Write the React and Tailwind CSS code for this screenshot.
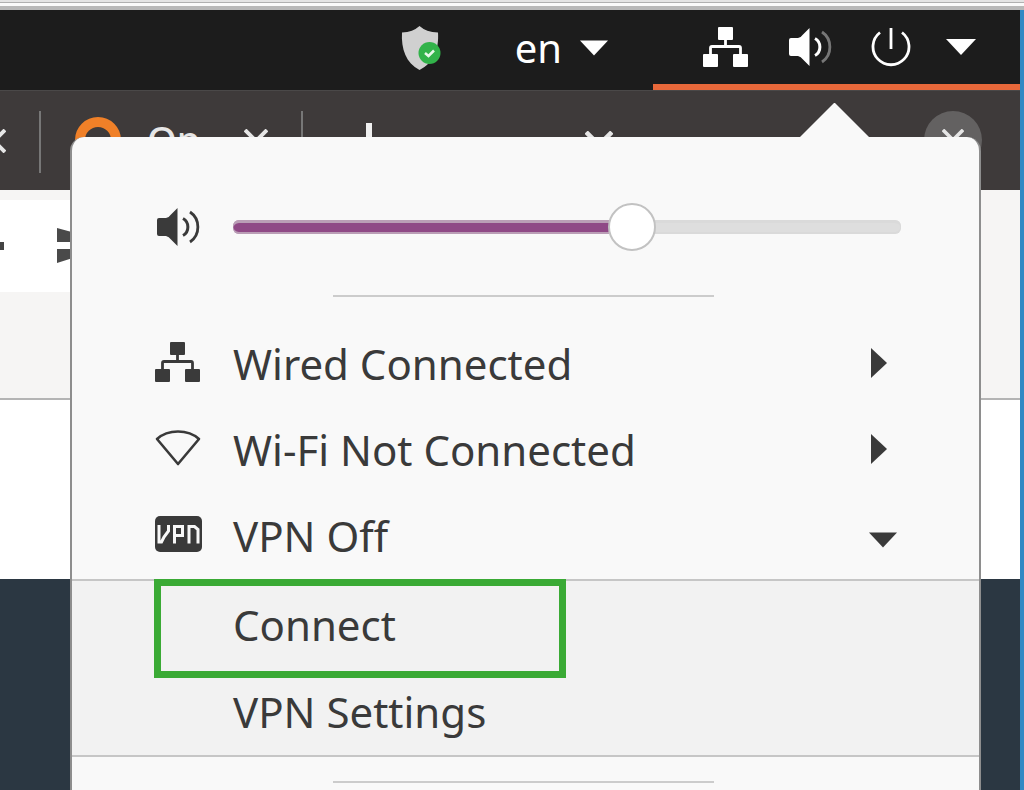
import { useState } from "react";

function NetworkIcon({ className }) {
  return (
    <svg viewBox="0 0 46 40" className={className} fill="currentColor" aria-hidden="true">
      <rect x="15" y="0" width="15" height="13" rx="1" />
      <rect x="0" y="27" width="15" height="13" rx="1" />
      <rect x="30" y="27" width="15" height="13" rx="1" />
      <path d="M22.500 12V19.500M7.500 28V21Q7.500 19.500 9 19.500H36Q37.500 19.500 37.500 21V28" fill="none" stroke="currentColor" strokeWidth="2.800" />
    </svg>
  );
}

function VolumeIcon({ className, dim }) {
  return (
    <svg viewBox="0 0 44 40" className={className} aria-hidden="true">
      <path d="M3 11H10Q13 10.500 15 7.500L21.500 1V39L15 32.500Q13 29.500 10 29H3Q1 29 1 27V13Q1 11 3 11Z" fill="currentColor" />
      <path d="M27 11.500C33.500 15 33.500 25 27 28.500" fill="none" stroke="currentColor" strokeWidth="3" />
      <path d="M34 5C44.500 12 44.500 28 34 35" fill="none" stroke="currentColor" strokeWidth="2.800" opacity={dim ? 0.4 : 1} />
    </svg>
  );
}

function WifiIcon({ className }) {
  return (
    <svg viewBox="0 0 46 38" className={className} aria-hidden="true">
      <path d="M2 10C13 0 33 0 44 10L23 35Z" fill="none" stroke="currentColor" strokeWidth="2.600" strokeLinejoin="round" />
    </svg>
  );
}

function VpnIcon({ className }) {
  return (
    <svg viewBox="0 0 48 36" className={className} aria-hidden="true">
      <rect width="47" height="36" rx="5" fill="currentColor" />
      <g fill="none" stroke="#f8f8f8" strokeWidth="3">
        <path d="M4 9V26H6.500L9 21L13.500 15V9" />
        <path d="M19.500 27.500V10.500H27.500V19.500H20" />
        <path d="M34 27.500V10.500H39.500L43 13.500V27.500" />
      </g>
    </svg>
  );
}

function PowerIcon({ className }) {
  return (
    <svg viewBox="0 0 40 40" className={className} fill="none" stroke="currentColor" strokeWidth="2.800" aria-hidden="true">
      <path d="M20 1V22M9 5.500A18 18 0 1 0 31 5.500" />
    </svg>
  );
}

function ShieldIcon({ className }) {
  return (
    <svg viewBox="0 0 40 46" className={className} aria-hidden="true">
      <path d="M18.500 1Q25 7 37 7.500C38 24 33 38 18.500 45C5 38 0 24 1 7.500Q12 7 18.500 1Z" fill="#d0d0d0" />
      <circle cx="28.500" cy="28" r="11" fill="#32b34a" />
      <path d="M24 28L27.500 31L33 25.500" fill="none" stroke="#e8f8ea" strokeWidth="2.500" />
    </svg>
  );
}

function DownArrow({ className }) {
  return (
    <svg viewBox="0 0 30 16" className={className} fill="currentColor" aria-hidden="true">
      <path d="M0 0H30L15 16Z" />
    </svg>
  );
}

function RightArrow({ className }) {
  return (
    <svg viewBox="0 0 16 30" className={className} fill="currentColor" aria-hidden="true">
      <path d="M0 0V30L16 15Z" />
    </svg>
  );
}

function CrossIcon({ className }) {
  return (
    <svg viewBox="0 0 24 24" className={className} fill="none" stroke="currentColor" strokeWidth="4" aria-hidden="true">
      <path d="M1 1L23 23M23 1L1 23" />
    </svg>
  );
}

function TopBar() {
  return (
    <header className="flex h-20 justify-end bg-[#1c1c1c] text-white">
      <div className="flex items-center pb-1">
        <ShieldIcon className="mr-[74px] h-[46px] w-10" />
        <button type="button" className="mr-[45px] flex items-center gap-[18px] text-[40px] leading-10">
          en
          <DownArrow className="h-4 w-7" />
        </button>
      </div>
      <button type="button" aria-label="System menu" className="flex w-[367px] items-center border-b-[6px] border-[#e8683a] pl-[50px]">
        <NetworkIcon className="h-10 w-[46px]" />
        <VolumeIcon className="ml-[39px] h-10 w-11" dim />
        <PowerIcon className="ml-[39px] h-10 w-10" />
        <DownArrow className="ml-[35px] h-4 w-[30px]" />
      </button>
    </header>
  );
}

function TabStrip() {
  return (
    <div className="flex h-[100px] items-start overflow-hidden border-t border-[#4a4848] bg-[#3e3a3a] pt-5 text-[#e6e6e6]">
      <CrossIcon className="mt-[18px] -ml-[18px] h-6 w-6 shrink-0" />
      <span className="ml-[33px] h-[62px] w-[2px] shrink-0 bg-[#777]" />
      <span className="mt-[6px] ml-[34px] h-[46px] w-[46px] shrink-0 rounded-full border-[10px] border-[#f08028]" />
      <span className="mt-[6px] ml-[26px] w-[97px] shrink-0 text-[38px] leading-[44px] font-medium">Op</span>
      <CrossIcon className="mt-[18px] h-6 w-6 shrink-0" />
      <span className="ml-[33px] h-[62px] w-[2px] shrink-0 bg-[#777]" />
      <span className="mt-3 ml-[63px] h-7 w-[6px] shrink-0 bg-[#f0f0f0]" />
      <CrossIcon className="mt-5 ml-[213px] h-7 w-7 shrink-0" />
      <span className="mr-[38px] ml-auto flex h-[58px] w-[58px] shrink-0 items-start justify-center rounded-full bg-[#636161] pt-[18px]">
        <CrossIcon className="h-[22px] w-[22px]" />
      </span>
    </div>
  );
}

function Page() {
  return (
    <div className="flex grow flex-col">
      <div className="flex h-[210px] flex-col border-b-2 border-[#b4b4b4] bg-[#f6f5f4]">
        <div className="mt-[10px] flex h-[92px] w-1/2 items-center bg-white">
          <span className="h-2 w-1 bg-[#444]" />
          <svg viewBox="0 0 30 36" className="ml-[53px] h-9 w-[30px]" fill="#4a4a4a" aria-hidden="true">
            <path d="M0 0L22 6V14H0ZM0 21H22V28L0 35Z" />
          </svg>
        </div>
      </div>
      <div className="h-[179px] bg-white" />
      <div className="grow bg-[#2b3742]" />
    </div>
  );
}

function MenuRow({ icon, label, open }) {
  return (
    <button type="button" aria-expanded={open} className="flex h-[86px] w-full items-center pr-[92px] pl-[83px] text-left">
      <span className="flex w-[78px] shrink-0 pb-1">{icon}</span>
      <span className="grow">{label}</span>
      {open ? <DownArrow className="mt-2 -mr-[10px] h-4 w-7" /> : <RightArrow className="mb-[2px] h-[30px] w-4" />}
    </button>
  );
}

function SystemMenu() {
  const [volume, setVolume] = useState(121);
  return (
    <div className="absolute top-[137px] right-[43px] bottom-0 left-[70px] rounded-t-[14px] border-x-2 border-[#8e8e8e] bg-[#f9f9f9] text-[42px] leading-[48px] text-[#3a3a3a]">
      <svg viewBox="0 0 72 36" className="absolute -top-[35px] right-[108px] h-9 w-[72px]" fill="#f9f9f9" aria-hidden="true">
        <path d="M0 36L35 1L36 1L71 36Z" />
      </svg>
      <div className="flex items-center pt-[66px] pr-[78px] pl-[84px]">
        <VolumeIcon className="mr-[33px] h-10 w-11 shrink-0" />
        <input
          type="range"
          min="0"
          max="200"
          value={volume}
          aria-label="Volume"
          onChange={(e) => setVolume(Number(e.target.value))}
          style={{ "--level": `${volume / 2}%` }}
          className="h-12 w-0 grow appearance-none bg-transparent [&::-webkit-slider-runnable-track]:h-[14px] [&::-webkit-slider-runnable-track]:rounded-[6px] [&::-webkit-slider-runnable-track]:bg-[linear-gradient(to_right,#8f4986_var(--level),#dedede_var(--level))] [&::-webkit-slider-runnable-track]:shadow-[inset_0_3px_rgba(215,215,215,0.6),inset_0_-2px_rgba(215,215,215,0.6)] [&::-webkit-slider-thumb]:-mt-[17px] [&::-webkit-slider-thumb]:h-12 [&::-webkit-slider-thumb]:w-12 [&::-webkit-slider-thumb]:appearance-none [&::-webkit-slider-thumb]:rounded-full [&::-webkit-slider-thumb]:border-2 [&::-webkit-slider-thumb]:border-[#c2c2c2] [&::-webkit-slider-thumb]:bg-white"
        />
      </div>
      <hr className="mr-auto ml-[261px] mt-11 mb-6 w-[42%] border-t-2 border-[#cccccc]" />
      <MenuRow icon={<NetworkIcon className="h-10 w-[46px]" />} label="Wired Connected" open={false} />
      <MenuRow icon={<WifiIcon className="h-[38px] w-[46px]" />} label="Wi-Fi Not Connected" open={false} />
      <MenuRow icon={<VpnIcon className="h-9 w-12" />} label="VPN Off" open />
      <div className="relative border-y-2 border-[#c6c6c6] bg-[#f2f2f2]">
        <button type="button" className="block h-[87px] w-full pl-[161px] text-left">Connect</button>
        <button type="button" className="block h-[87px] w-full pl-[161px] text-left">VPN Settings</button>
        <span className="pointer-events-none absolute -top-[2px] left-[82px] h-[99px] w-[412px] border-[7px] border-[#3aaa35]" />
      </div>
      <hr className="mr-auto ml-[261px] mt-6 w-[42%] border-t-2 border-[#cccccc]" />
    </div>
  );
}

export default function App() {
  return (
    <div className="relative flex min-h-screen flex-col overflow-hidden bg-white font-['Noto_Sans','Open_Sans',sans-serif]">
      <div className="h-[10px] border-b-4 border-[#b8b8b8] bg-[linear-gradient(#e4e4e4_2px,#b0b0b0_2px,#b0b0b0_3px,#fafafa_3px)]" />
      <div className="flex grow flex-col border-r-4 border-[#3189c4]">
        <TopBar />
        <TabStrip />
        <Page />
      </div>
      <SystemMenu />
    </div>
  );
}
